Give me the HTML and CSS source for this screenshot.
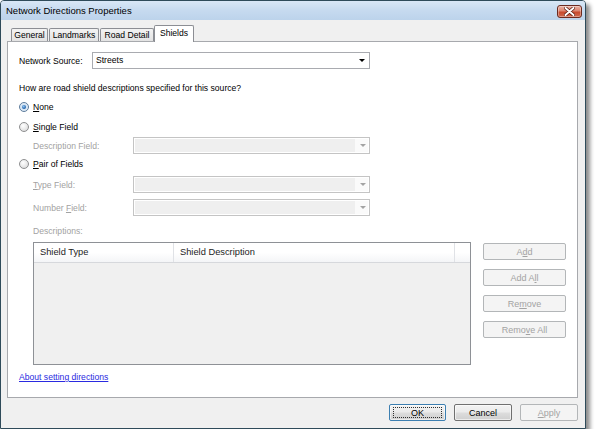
FILE: index.html
```html
<!DOCTYPE html>
<html>
<head>
<meta charset="utf-8">
<link rel="stylesheet" href="styles.css">
</head>
<body>
<div class="window">
  <div class="titlebar">
    <span class="title">Network Directions Properties</span>
    <div class="close">
      <svg width="11" height="9" viewBox="0 0 11 9"><path d="M1.5 1 L9.5 8 M9.5 1 L1.5 8" stroke="#5a1a10" stroke-width="3.4" stroke-linecap="round"/><path d="M1.5 1 L9.5 8 M9.5 1 L1.5 8" stroke="#fff" stroke-width="1.9" stroke-linecap="round"/></svg>
    </div>
  </div>
  <div class="client">
    <div class="tabs">
      <div class="tab t-general">General</div>
      <div class="tab t-landmarks">Landmarks</div>
      <div class="tab t-road">Road Detail</div>
      <div class="tab t-shields active">Shields</div>
    </div>
    <div class="panel">
      <div class="row row-source">
        <span class="lbl lbl-source">Network Source:</span>
        <div class="combo combo-source">
          <span class="combo-text">Streets</span>
          <span class="combo-btn"><svg width="6" height="3" viewBox="0 0 6 3"><path d="M0 0 H6 L3 3 Z" fill="#000"/></svg></span>
        </div>
      </div>
      <div class="line question">How are road shield descriptions specified for this source?</div>
      <div class="line radio-row r-none"><span class="radio checked"></span><span><u>N</u>one</span></div>
      <div class="line radio-row r-single"><span class="radio"></span><span><u>S</u>ingle Field</span></div>
      <div class="row sub r-desc">
        <span class="lbl lbl-sub disabled">Description Field:</span>
        <div class="combo combo-sub off">
          <span class="combo-text"></span>
          <span class="combo-btn"><svg width="6" height="3" viewBox="0 0 6 3"><path d="M0 0 H6 L3 3 Z" fill="#a3a3a3"/></svg></span>
        </div>
      </div>
      <div class="line radio-row r-pair"><span class="radio"></span><span><u>P</u>air of Fields</span></div>
      <div class="row sub r-type">
        <span class="lbl lbl-sub disabled"><u>T</u>ype Field:</span>
        <div class="combo combo-sub off">
          <span class="combo-text"></span>
          <span class="combo-btn"><svg width="6" height="3" viewBox="0 0 6 3"><path d="M0 0 H6 L3 3 Z" fill="#a3a3a3"/></svg></span>
        </div>
      </div>
      <div class="row sub r-number">
        <span class="lbl lbl-sub disabled">Number <u>F</u>ield:</span>
        <div class="combo combo-sub off">
          <span class="combo-text"></span>
          <span class="combo-btn"><svg width="6" height="3" viewBox="0 0 6 3"><path d="M0 0 H6 L3 3 Z" fill="#a3a3a3"/></svg></span>
        </div>
      </div>
      <div class="line sub disabled r-descs">Descriptions:</div>
      <div class="list-area sub">
        <div class="list">
          <div class="list-head">
            <div class="col col-type">Shield Type</div>
            <div class="col col-desc">Shield Description</div>
            <div class="col col-rest"></div>
          </div>
          <div class="list-body"></div>
        </div>
        <div class="side-buttons">
          <div class="btn off">A<u>d</u>d</div>
          <div class="btn off">Add A<u>l</u>l</div>
          <div class="btn off">Re<u>m</u>ove</div>
          <div class="btn off">Remo<u>v</u>e All</div>
        </div>
      </div>
      <div class="line link-row"><a class="link" href="#">About setting directions</a></div>
    </div>
    <div class="footer">
      <div class="btn dlg default">OK</div>
      <div class="btn dlg">Cancel</div>
      <div class="btn dlg off"><u>A</u>pply</div>
    </div>
  </div>
</div>
</body>
</html>
```
FILE: styles.css
```css
* { box-sizing: border-box; }
html, body { margin: 0; padding: 0; background: #fff; }
body {
  font-family: "Liberation Sans", Arial, sans-serif;
  font-size: 8.6px;
  color: #000;
}
u { text-decoration: underline; text-underline-offset: 1px; }

.window {
  width: 586px;
  height: 429px;
  border: 1px solid #2f4b5a;
  border-radius: 4px 4px 0 0;
  background: #f0f0f0;
  box-shadow: 4px 4px 4px rgba(0,0,0,0.45);
  display: flex;
  flex-direction: column;
  overflow: hidden;
}

.titlebar {
  height: 19px;
  flex: none;
  display: flex;
  align-items: flex-start;
  justify-content: space-between;
  padding: 0 3px 0 5px;
  background: linear-gradient(#d9e7f6 0%, #c6daef 50%, #bcd3eb 100%);
}
.title {
  font-size: 9.5px;
  line-height: 19px;
  color: #000;
}
.close {
  margin-top: 4px;
  width: 25px;
  height: 13px;
  border: 1px solid #6b2a20;
  border-radius: 3px;
  background: linear-gradient(#eab0a3 0%, #dc8570 45%, #c8492d 55%, #cf6a4f 100%);
  display: flex;
  align-items: center;
  justify-content: center;
  box-shadow: inset 0 0 0 1px rgba(255,255,255,0.35);
}

.client {
  flex: 1;
  display: flex;
  flex-direction: column;
  padding: 5px 7px 0 6px;
}

.tabs {
  height: 16px;
  flex: none;
  display: flex;
  align-items: flex-end;
  padding-left: 4px;
}
.tab {
  height: 13px;
  border: 1px solid #8c8e94;
  border-bottom: none;
  border-radius: 2px 2px 0 0;
  background: linear-gradient(#f3f3f3, #e3e3e3);
  font-size: 8.6px;
  line-height: 12px;
  text-align: center;
  margin-right: 1px;
}
.t-general { width: 37px; }
.t-landmarks { width: 50px; }
.t-road { width: 54px; margin-right: 0; }
.t-shields { width: 40px; }
.tab.active {
  height: 17px;
  margin-bottom: -1px;
  background: #fff;
  position: relative;
  z-index: 1;
  line-height: 15px;
  border-color: #8c8e94;
}

.panel {
  height: 357px;
  flex: none;
  background: #fff;
  border: 1px solid #a7a9ad;
  padding: 0 0 0 11px;
  display: flex;
  flex-direction: column;
}

.row { display: flex; align-items: center; height: 17px; flex: none; }
.line { height: 14px; line-height: 14px; flex: none; display: flex; align-items: center; }
.sub { padding-left: 14px; }
.disabled { color: #a2a2a2; }

.row-source { margin-top: 10px; }
.lbl-source { width: 73px; }
.question { margin-top: 12px; }
.r-none { margin-top: 5px; }
.r-single { margin-top: 6px; }
.r-desc { margin-top: 3px; }
.r-pair { margin-top: 3px; }
.r-type { margin-top: 5px; }
.r-number { margin-top: 6px; }
.r-descs { margin-top: 8px; }
.list-area { margin-top: 4px; }
.link-row { margin-top: 5px; }

.lbl-sub { width: 100px; }

.combo {
  display: flex;
  height: 17px;
  border: 1px solid #a9abb0;
  background: #fff;
}
.combo-source { width: 278px; }
.combo-sub { width: 237px; }
.combo-text { flex: 1; padding-left: 3px; line-height: 15px; }
.combo-btn {
  width: 14px;
  display: flex;
  align-items: center;
  justify-content: center;
}
.combo.off {
  border-color: #c4c4c4;
  background: #fafafa;
  box-shadow: inset 0 0 0 1px #fff;
}
.combo.off .combo-text { background: #efefef; margin: 1px 0 1px 1px; }
.combo.off .combo-btn { padding-left: 1px; }

.radio-row { gap: 4px; }
.radio {
  width: 10px;
  height: 10px;
  border-radius: 50%;
  border: 1px solid #8e8f90;
  background: radial-gradient(circle at 40% 35%, #ffffff 0%, #e6e6e6 60%, #cfcfcf 100%);
  display: flex;
  align-items: center;
  justify-content: center;
  flex: none;
}
.radio.checked {
  border-color: #5d7c9c;
  background: radial-gradient(circle, #c7dcef 0%, #e9f1f9 100%);
}
.radio.checked::after {
  content: "";
  width: 4px;
  height: 4px;
  border-radius: 50%;
  background: radial-gradient(circle at 40% 35%, #8fc3ee 0%, #2b6cb5 60%, #14417a 100%);
}

.list-area {
  display: flex;
  height: 123px;
  flex: none;
}
.list {
  width: 438px;
  height: 123px;
  border: 1px solid #8e9196;
  display: flex;
  flex-direction: column;
  background: #f0f0f0;
}
.list-head {
  height: 20px;
  flex: none;
  display: flex;
  background: linear-gradient(#ffffff 0%, #ffffff 50%, #f4f5f7 100%);
  border-bottom: 1px solid #d6d8dc;
}
.col {
  font-size: 9.3px;
  line-height: 19px;
  color: #1c1c1c;
  padding-left: 6px;
  border-right: 1px solid #e0e2e6;
}
.col-type { width: 140px; }
.col-desc { width: 281px; }
.col-rest { flex: 1; border-right: none; }
.list-body { flex: 1; }

.side-buttons {
  margin-left: 12px;
  padding-top: 1px;
  display: flex;
  flex-direction: column;
  gap: 9px;
}
.btn {
  width: 83px;
  height: 17px;
  border: 1px solid #707070;
  border-radius: 2px;
  background: linear-gradient(#f2f2f2 0%, #ebebeb 48%, #dddddd 52%, #cfcfcf 100%);
  box-shadow: inset 0 0 0 1px rgba(255,255,255,0.6);
  font-size: 9px;
  display: flex;
  align-items: center;
  justify-content: center;
  position: relative;
  color: #000;
}
.btn.off {
  border-color: #b3b6b8;
  background: #f4f4f4;
  box-shadow: none;
  color: #a3a3a3;
}
.btn.default { border-color: #3c7fb1; }
.btn.default::before {
  content: "";
  position: absolute;
  inset: 2px 3px;
  border: 1px dotted #303030;
}

.link {
  color: #2a2ae0;
  text-decoration: underline;
  font-size: 8.6px;
}

.footer {
  flex: 1;
  display: flex;
  justify-content: flex-end;
  align-items: flex-start;
  padding-top: 6px;
  gap: 8px;
}
.btn.dlg { width: 58px; }
.btn.dlg.default { width: 57px; }
```
